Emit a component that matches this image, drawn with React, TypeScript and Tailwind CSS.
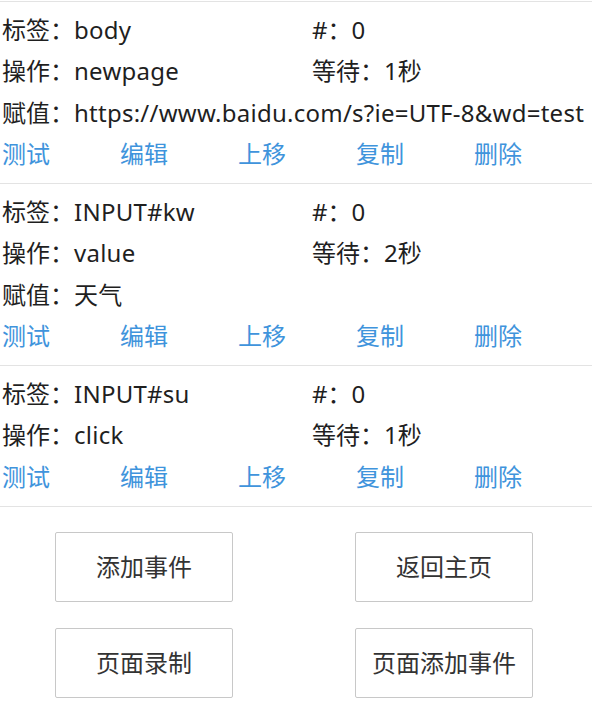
import React from "react";

type Item = { tag: string; op: string; wait: string; value?: string };

const items: Item[] = [
  { tag: "body", op: "newpage", wait: "1秒", value: "https://www.baidu.com/s?ie=UTF-8&wd=test" },
  { tag: "INPUT#kw", op: "value", wait: "2秒", value: "天气" },
  { tag: "INPUT#su", op: "click", wait: "1秒" },
];

const actions = ["测试", "编辑", "上移", "复制", "删除"];

function V({ children }: { children: React.ReactNode }) {
  return <span className="tracking-[0.25px]">{children}</span>;
}

export default function App() {
  return (
    <div
      className="w-[592px] h-[710px] bg-white text-[24px] text-[#1f1f1f] overflow-hidden"
      style={{ fontFamily: '"Noto Sans", "Noto Sans CJK SC", sans-serif' }}
    >
      <div className="h-[1px]" />
      {items.map((it, i) => (
        <div key={i} className="border-t-[1.5px] border-[#e3e3e3] pl-[2px] pt-[7px] pb-[8px]">
          <div className="flex h-[41.5px] items-center">
            <div className="w-[310px] whitespace-nowrap">标签：<V>{it.tag}</V></div>
            <div className="whitespace-nowrap">#：<V>0</V></div>
          </div>
          <div className="flex h-[41.5px] items-center">
            <div className="w-[310px] whitespace-nowrap">操作：<V>{it.op}</V></div>
            <div className="whitespace-nowrap">等待：{it.wait}</div>
          </div>
          {it.value !== undefined && (
            <div className="flex h-[41.5px] items-center whitespace-nowrap">赋值：<V>{it.value}</V></div>
          )}
          <div className="grid grid-cols-5 h-[41.5px] items-center text-[#3f94dc]">
            {actions.map((a) => (
              <div key={a}>{a}</div>
            ))}
          </div>
        </div>
      ))}
      <div className="border-t-[1.5px] border-[#e3e3e3] pt-[25px] pl-[55px] flex flex-col gap-[26px]">
        <div className="flex gap-[122px]">
          <button className="w-[178px] h-[70px] border border-[#c8c8c8] rounded-[2px] bg-white text-[#333]">添加事件</button>
          <button className="w-[178px] h-[70px] border border-[#c8c8c8] rounded-[2px] bg-white text-[#333]">返回主页</button>
        </div>
        <div className="flex gap-[122px]">
          <button className="w-[178px] h-[70px] border border-[#c8c8c8] rounded-[2px] bg-white text-[#333]">页面录制</button>
          <button className="w-[178px] h-[70px] border border-[#c8c8c8] rounded-[2px] bg-white text-[#333]">页面添加事件</button>
        </div>
      </div>
    </div>
  );
}
